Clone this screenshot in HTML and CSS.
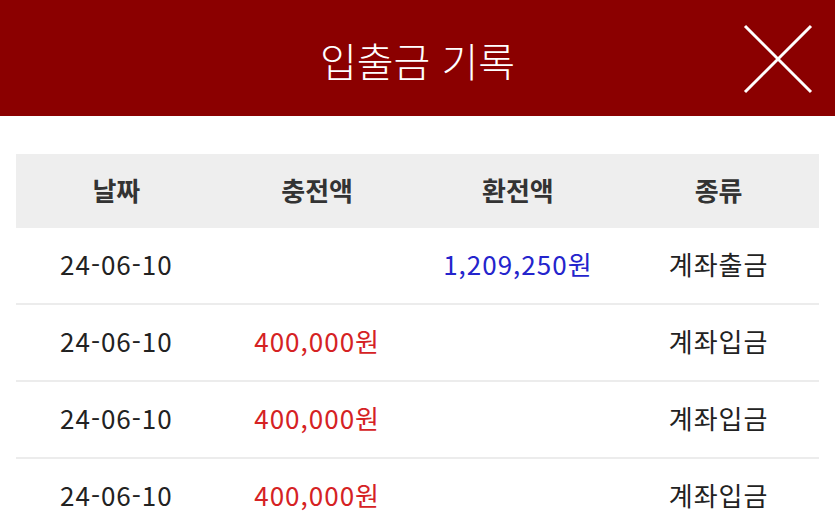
FILE: index.html
```html
<!DOCTYPE html>
<html lang="ko">
<head>
    <meta charset="UTF-8">
    <meta name="viewport" content="width=device-width, initial-scale=1.0">
    <title>입출금 기록</title>
    <link rel="stylesheet" href="styles.css">
</head>
<body>
    <div class="topbar">
        <h1 class="title">입출금 기록</h1>
        <button class="close-btn" aria-label="닫기">
            <svg width="70" height="70" viewBox="0 0 70 70">
                <path d="M2 2 L68 68 M68 2 L2 68" stroke="#fff" stroke-width="3" fill="none"/>
            </svg>
        </button>
    </div>

    <div class="content">
        <table class="history">
            <thead>
                <tr>
                    <th>날짜</th>
                    <th>충전액</th>
                    <th>환전액</th>
                    <th>종류</th>
                </tr>
            </thead>
            <tbody>
                <tr>
                    <td>24-06-10</td>
                    <td></td>
                    <td class="out">1,209,250원</td>
                    <td>계좌출금</td>
                </tr>
                <tr>
                    <td>24-06-10</td>
                    <td class="in">400,000원</td>
                    <td></td>
                    <td>계좌입금</td>
                </tr>
                <tr>
                    <td>24-06-10</td>
                    <td class="in">400,000원</td>
                    <td></td>
                    <td>계좌입금</td>
                </tr>
                <tr>
                    <td>24-06-10</td>
                    <td class="in">400,000원</td>
                    <td></td>
                    <td>계좌입금</td>
                </tr>
            </tbody>
        </table>
    </div>
</body>
</html>
```

FILE: styles.css
```css
body {
    margin: 0;
    font-family: "Noto Sans CJK KR", "Noto Sans", sans-serif;
    background: white;
    overflow: hidden;
}
.topbar {
    position: relative;
    height: 116px;
    background: #8b0000;
    display: flex;
    align-items: center;
    justify-content: center;
}
.title {
    margin: 0 0 -4px;
    color: white;
    font-size: 40px;
    font-weight: 300;
}
.close-btn {
    position: absolute;
    right: 22px;
    top: 24px;
    background: none;
    border: none;
    padding: 0;
    width: 70px;
    height: 70px;
    cursor: pointer;
}
.close-btn svg {
    display: block;
}
.content {
    padding: 38px 16px 0;
}
.history {
    width: 100%;
    border-collapse: collapse;
    table-layout: fixed;
}
.history th {
    background: #eeeeee;
    height: 70px;
    font-size: 26px;
    font-weight: 700;
    color: #333;
    padding: 0 0 4px;
}
.history td {
    height: 71px;
    border-bottom: 2px solid #ececec;
    text-align: center;
    font-size: 26px;
    letter-spacing: 1px;
    color: #222;
    padding: 0 0 4px;
}
.history td.in {
    color: #d52224;
}
.history td.out {
    color: #2424cc;
}
```
